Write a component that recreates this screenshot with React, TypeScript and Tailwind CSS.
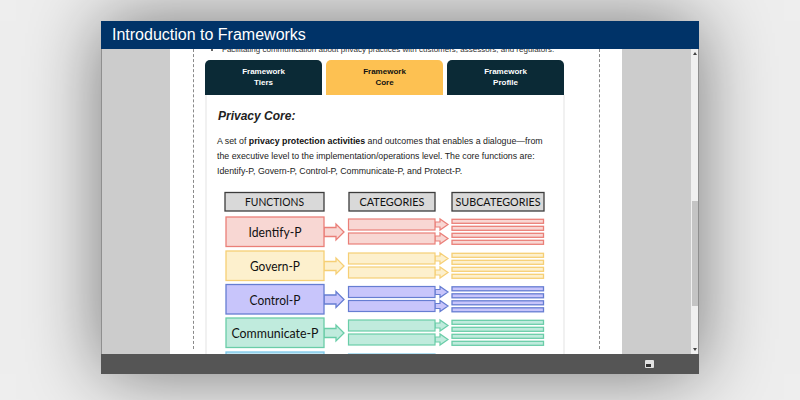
import React from 'react';

const FONT = "font-['Liberation_Sans',Arial,sans-serif]";
const CHART_FONT = "Lato, 'Open Sans', sans-serif";

const rows = [
  { label: 'Identify-P', len: 53, y: 217, fill: '#f8d7d3', stroke: '#ea7f78' },
  { label: 'Govern-P', len: 50, y: 251, fill: '#fdf0cd', stroke: '#f6cf75' },
  { label: 'Control-P', len: 51, y: 284.5, fill: '#c8c5fb', stroke: '#667dd2' },
  { label: 'Communicate-P', len: 87, y: 318, fill: '#c0ebdd', stroke: '#6acda8' },
];

const Arrow = ({ x, cy, w, headX, tipX, shaft, head, fill, stroke }: {
  x: number; cy: number; w: number; headX: number; tipX: number; shaft: number; head: number; fill: string; stroke: string;
}) => (
  <polygon
    points={`${x},${cy - shaft} ${headX},${cy - shaft} ${headX},${cy - head} ${tipX},${cy} ${headX},${cy + head} ${headX},${cy + shaft} ${x},${cy + shaft}`}
    fill={fill}
    stroke={stroke}
    strokeWidth={w}
  />
);

const HeadBox = ({ x, w, label, len }: { x: number; w: number; label: string; len: number }) => (
  <g>
    <rect x={x} y={2.5} width={w} height={18.5} fill="#d9d9d9" stroke="#3c3c3c" strokeWidth={1.3} />
    <text x={x + w / 2} y={16} textAnchor="middle" fontSize={12} textLength={len} lengthAdjust="spacingAndGlyphs" fontFamily={CHART_FONT} fill="#111">{label}</text>
  </g>
);

// the functions chart, coordinates are relative to its top left corner
const Chart = () => (
  <svg width={330} height={170} viewBox="0 0 330 170" className="block">
    <HeadBox x={5} w={99} label="FUNCTIONS" len={59} />
    <HeadBox x={129} w={86} label="CATEGORIES" len={65} />
    <HeadBox x={232} w={92} label="SUBCATEGORIES" len={85} />
    {rows.map((r) => {
      const top = r.y - 190;
      return (
        <g key={r.label}>
          <Arrow x={104} cy={top + 15} w={1.3} headX={116} tipX={124} shaft={4.5} head={8} fill={r.fill} stroke={r.stroke} />
          <rect x={6} y={top} width={98} height={29.5} fill={r.fill} stroke={r.stroke} strokeWidth={1.3} />
          <text x={55} y={top + 20} textAnchor="middle" fontSize={14} textLength={r.len} lengthAdjust="spacingAndGlyphs" fontFamily={CHART_FONT} fill="#111">{r.label}</text>
          {[2, 16].map((o) => (
            <g key={o}>
              <Arrow x={215} cy={top + o + 5.5} w={1.2} headX={220} tipX={228} shaft={2.5} head={5.5} fill={r.fill} stroke={r.stroke} />
              <rect x={128.5} y={top + o} width={86.5} height={11} fill={r.fill} stroke={r.stroke} strokeWidth={1.2} />
              <rect x={232} y={top + o + 0.3} width={91.5} height={4} fill={r.fill} stroke={r.stroke} strokeWidth={1.3} />
              <rect x={232} y={top + o + 7.3} width={91.5} height={4} fill={r.fill} stroke={r.stroke} strokeWidth={1.3} />
            </g>
          ))}
        </g>
      );
    })}
    <rect x={6} y={162} width={98} height={8} fill="#bfe6f5" stroke="#7cc8e8" strokeWidth={1.3} />
    <rect x={128.5} y={164} width={86.5} height={6} fill="#bfe6f5" stroke="#7cc8e8" strokeWidth={1.2} />
  </svg>
);

const Tab = ({ active, children, width }: { active?: boolean; children: React.ReactNode; width: string }) => (
  <div className={`${width} h-[35px] pt-[6px] rounded-t-[5px] text-center text-[8px] leading-[11px] font-bold ${active ? 'bg-[#fdc152] text-[#111]' : 'bg-[#0b2a36] text-white'}`}>
    {children}
  </div>
);

export default function App() {
  return (
    <div className={`w-[800px] h-[400px] pt-[21px] pl-[101px] overflow-hidden bg-[#eeeeee] ${FONT}`}>
      <div className="w-[598px] h-[353px] flex flex-col shadow-[0_0_70px_rgba(0,0,0,0.5)]">
        <div className="h-[28px] shrink-0 bg-[#003368] pl-[11px] text-white text-[16px] leading-[27px]">
          Introduction to Frameworks
        </div>

        <div className="flex-1 min-h-0 flex bg-[#cccccc] border-l border-[#8f8f8f]">
          <div className="flex-1 min-w-0 overflow-hidden pl-[68px]">
            <div className="w-[452px] h-[305px] bg-white pl-[23px] pr-[22px] overflow-hidden">
              <div className="h-[305px] border-x border-dashed border-[#8a8a8a] pl-[11px] pr-[34px] -mt-[5px]">
                <ul className="list-disc pl-[17px] text-[8px] leading-[11px] text-[#333] h-[16px] whitespace-nowrap">
                  <li>Facilitating communication about privacy practices with customers, assessors, and regulators.</li>
                </ul>
                <div className="flex gap-[4px]">
                  <Tab width="w-[117px]">Framework<br />Tiers</Tab>
                  <Tab width="w-[117px]" active>Framework<br />Core</Tab>
                  <Tab width="w-[117px]">Framework<br />Profile</Tab>
                </div>
                <div className="border-x-[2px] border-[#f1f1f1] h-[300px] pl-[11px] pt-[13px]">
                  <h2 className="text-[12px] leading-[16px] font-bold italic text-[#222]">Privacy Core:</h2>
                  <p className="mt-[10px] -ml-[1px] whitespace-nowrap text-[8.8px] leading-[15px] text-[#222]">
                    A set of <b className="text-[#111]">privacy protection activities</b> and outcomes that enables a dialogue—from<br />
                    the executive level to the implementation/operations level. The core functions are:<br />
                    Identify-P, Govern-P, Control-P, Communicate-P, and Protect-P.
                  </p>
                  <div className="mt-[11px] ml-[2px]">
                    <Chart />
                  </div>
                </div>
              </div>
            </div>
          </div>

          <div className="w-[8px] shrink-0 bg-[#f0f0f0] border-r border-[#8f8f8f] flex flex-col items-center justify-between py-[3px] relative">
            <div className="w-0 h-0 border-x-[2px] border-x-transparent border-b-[3px] border-b-[#444]" />
            <div className="absolute left-[1px] top-[152px] w-[6px] h-[105px] bg-[#c4c4c4]" />
            <div className="w-0 h-0 border-x-[2px] border-x-transparent border-t-[3px] border-t-[#444]" />
          </div>
        </div>

        <div className="h-[20px] shrink-0 bg-[#555555] flex items-center justify-end pr-[45px]">
          <div className="w-[9px] h-[8px] bg-[#e2e2e2] rounded-[1px] relative">
            <div className="absolute left-[1px] bottom-[1px] w-[5px] h-[3px] bg-[#333]" />
          </div>
        </div>
      </div>
    </div>
  );
}
